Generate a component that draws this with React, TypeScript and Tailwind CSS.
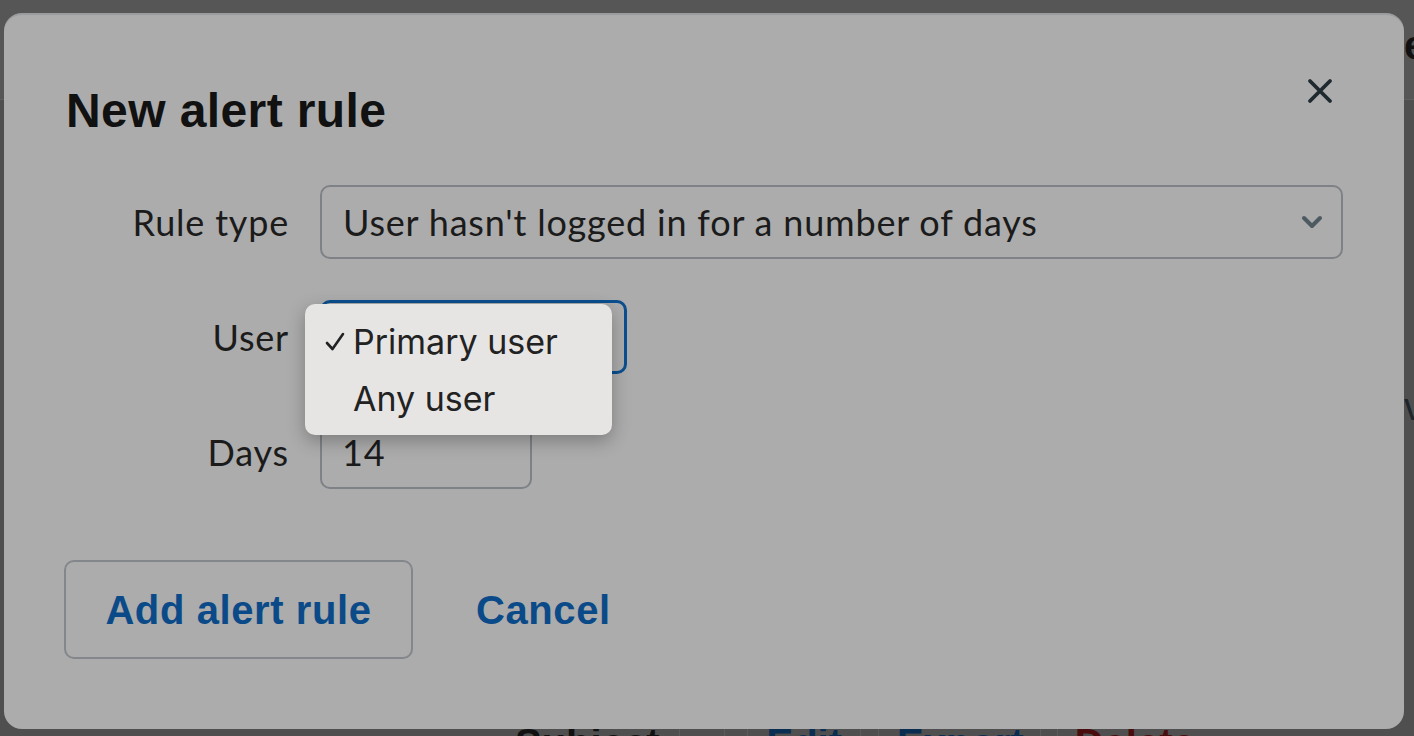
import { useState } from 'react';

const LABEL = "font-['Lato','Liberation_Sans',sans-serif] text-[36px] tracking-[0.8px] text-[#1b1b1b] leading-none";

function Chevron() {
  return (
    <svg width="22" height="14" viewBox="0 0 22 14" fill="none">
      <path d="M3 3l8 8 8-8" stroke="#4e5a62" strokeWidth="4" strokeLinecap="round" strokeLinejoin="round" />
    </svg>
  );
}

function CloseIcon() {
  return (
    <svg width="26" height="26" viewBox="0 0 26 26" fill="none">
      <path d="M3 3l20 20M23 3L3 23" stroke="#1f2a30" strokeWidth="3.8" strokeLinecap="round" />
    </svg>
  );
}

function Check() {
  return (
    <svg width="20" height="20" viewBox="0 0 20 20" fill="none">
      <path d="M2 11l5.5 6L18 2" stroke="#222" strokeWidth="2.6" strokeLinecap="round" strokeLinejoin="round" />
    </svg>
  );
}

function Row({ label, children }: { label: string; children: React.ReactNode }) {
  return (
    <div className="flex items-center">
      <div className={`w-[223px] shrink-0 text-right ${LABEL}`}>{label}</div>
      <div className="ml-[31px] flex-1 min-w-0">{children}</div>
    </div>
  );
}

export default function App() {
  const [user] = useState('Primary user');
  const options = ['Primary user', 'Any user'];

  return (
    <div className="relative w-[1414px] h-[736px] overflow-hidden bg-[#4f4f4f] font-['Liberation_Sans',sans-serif]">
      {/* page behind the dialog */}
      <div className="flex flex-col h-full">
        <div className="h-[100px] shrink-0 flex items-start justify-end bg-[#565656] border-b border-[#5f5f5f]">
          <span className="mt-[25px] w-[10px] overflow-hidden whitespace-nowrap text-[40px] font-bold leading-none text-[#111]">e</span>
        </div>
        <div className="flex-1 flex items-center justify-end">
          <span className="mt-[-8px] w-[10px] overflow-hidden whitespace-nowrap text-[38px] leading-none text-[#1d262c]">v</span>
        </div>
        <div className="h-[14px] shrink-0 flex items-start text-[40px] leading-none font-bold">
          <span className="ml-[515px] mt-[1px] text-[#111]">Subject</span>
          <span className="ml-[20px] h-full border-l border-[#5c5c5c]" />
          <span className="ml-[44px] h-full border-l border-[#5c5c5c]" />
          <span className="ml-[22px] h-full border-l border-[#5c5c5c]" />
          <span className="ml-[18px] mt-[1px] text-[#0a2d52]">Edit</span>
          <span className="ml-[18px] h-full border-l border-[#5c5c5c]" />
          <span className="ml-[17px] h-full border-l border-[#5c5c5c]" />
          <span className="ml-[18px] mt-[1px] text-[#0a2d52]">Export</span>
          <span className="ml-[16px] h-full border-l border-[#5c5c5c]" />
          <span className="ml-[16px] h-full border-l border-[#5c5c5c]" />
          <span className="ml-[17px] mt-[1px] text-[#4a0d0d]">Delete</span>
        </div>
      </div>

      {/* dialog */}
      <div className="absolute left-[4px] top-[13px] w-[1400px] h-[716px] rounded-[18px] bg-[#acacac] border-t-2 border-[#9b9ca0] pl-[62px] pr-[61px] pt-[72px]">
        <button className="absolute right-[71px] top-[63px] w-[26px] h-[26px] flex items-center justify-center">
          <CloseIcon />
        </button>

        <h1 className="text-[48px] leading-[48px] font-bold text-[#111] tracking-[0.4px]">New alert rule</h1>

        <div className="mt-[50px] flex flex-col gap-[41px]">
          <Row label="Rule type">
            <div className="h-[74px] rounded-[10px] border-2 border-[#7e8286] flex items-center justify-between pl-[21px] pr-[18px]">
              <span className={LABEL}>User hasn't logged in for a number of days</span>
              <Chevron />
            </div>
          </Row>

          <Row label="User">
            <div className="relative w-[307px]">
              <div className="h-[74px] rounded-[10px] border-[3px] border-[#0b4f8f] flex items-center pl-[20px]">
                <span className={LABEL}>{user}</span>
              </div>
              <div className="absolute left-[-15px] top-[4px] w-[307px] h-[131px] rounded-[10px] bg-[#e6e5e4] shadow-[0_6px_18px_rgba(0,0,0,0.28)] flex flex-col pt-[9px] font-['Inter',sans-serif] text-[34px] leading-none text-[#222]">
                {options.map(o => (
                  <div key={o} className="h-[57px] flex items-center">
                    <span className="w-[48px] pl-[20px] flex items-center">{o === user ? <Check /> : null}</span>
                    <span>{o}</span>
                  </div>
                ))}
              </div>
            </div>
          </Row>

          <Row label="Days">
            <div className="w-[212px] h-[74px] rounded-[10px] border-2 border-[#7e8286] flex items-center pl-[20px]">
              <span className={LABEL}>14</span>
            </div>
          </Row>
        </div>

        <div className="mt-[71px] ml-[-2px] flex items-center">
          <button className="w-[349px] h-[99px] rounded-[10px] border-2 border-[#83878b] text-[40px] font-bold tracking-[0.6px] text-[#0b4a88]">
            Add alert rule
          </button>
          <button className="ml-[63px] text-[40px] font-bold tracking-[0.6px] text-[#0b4a88]">Cancel</button>
        </div>
      </div>
    </div>
  );
}
